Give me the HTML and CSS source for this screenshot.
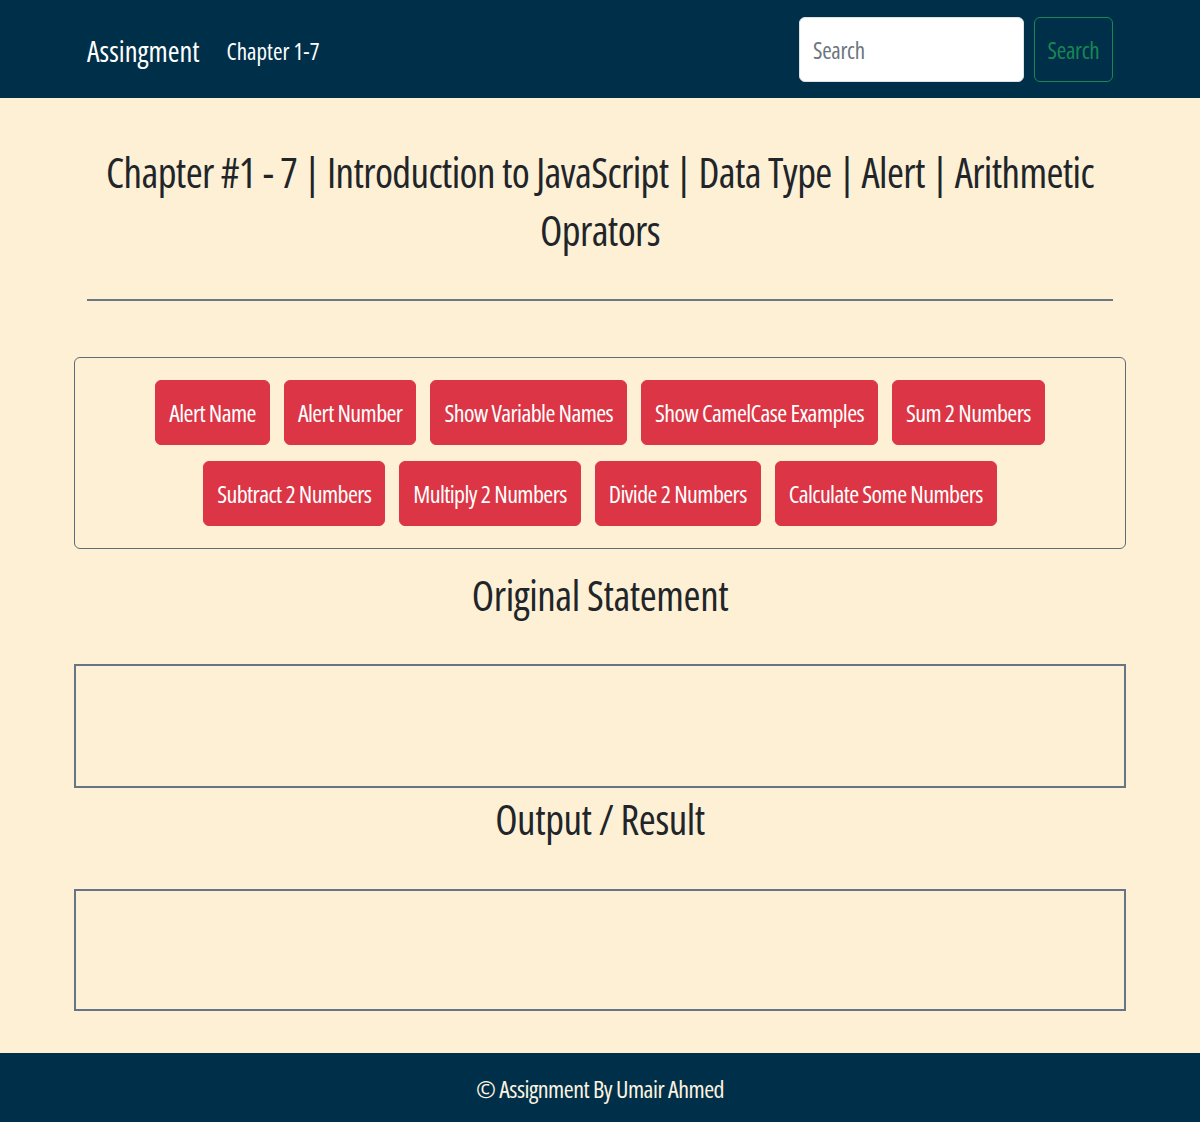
FILE: index.html
```html
<!DOCTYPE html>
<html lang="en">
<head>
<meta charset="utf-8">
<title>Assingment</title>
<link rel="stylesheet" href="styles.css">
</head>
<body>
<nav class="navbar">
  <div class="nav-inner">
    <a class="brand" href="#">Assingment</a>
    <a class="nav-link" href="#">Chapter 1-7</a>
    <form class="search">
      <input class="search-input" type="search" placeholder="Search">
      <button class="search-btn" type="button">Search</button>
    </form>
  </div>
</nav>
<main class="container">
  <h1 class="title">Chapter #1 - 7 | Introduction to JavaScript | Data Type | Alert | Arithmetic Oprators</h1>
  <hr class="rule">
  <div class="btn-box">
    <button class="btn">Alert Name</button>
    <button class="btn">Alert Number</button>
    <button class="btn">Show Variable Names</button>
    <button class="btn">Show CamelCase Examples</button>
    <button class="btn">Sum 2 Numbers</button>
    <button class="btn">Subtract 2 Numbers</button>
    <button class="btn">Multiply 2 Numbers</button>
    <button class="btn">Divide 2 Numbers</button>
    <button class="btn">Calculate Some Numbers</button>
  </div>
  <h2 class="sub sub-first">Original Statement</h2>
  <div class="panel panel-a"></div>
  <h2 class="sub sub-second">Output / Result</h2>
  <div class="panel panel-b"></div>
</main>
<footer class="footer">© Assignment By Umair Ahmed</footer>
</body>
</html>
```
FILE: styles.css
```css
* { box-sizing: border-box; }
body {
  margin: 0;
  background: #fdf0d5;
  font-family: "Open Sans", "Noto Sans", sans-serif;
  font-stretch: 75%;
  color: #212529;
}
.navbar {
  background: #003049;
  height: 98px;
  display: flex;
  align-items: center;
}
.nav-inner {
  width: 1026px;
  margin: 0 auto;
  display: flex;
  align-items: center;
}
.brand {
  color: #fff;
  text-decoration: none;
  font-size: 28.5px;
  line-height: 40px;
  margin-right: 27px;
  padding-top: 3px;
}
.nav-link {
  color: #fff;
  text-decoration: none;
  font-size: 23px;
  line-height: 40px;
  padding-top: 3px;
}
.search {
  margin-left: auto;
  display: flex;
  gap: 10px;
}
.search-input {
  width: 225px;
  height: 65px;
  border: 1px solid #dee2e6;
  border-radius: 6px;
  background: #fff;
  padding: 2px 13px 0;
  font-family: inherit;
  font-stretch: 75%;
  font-size: 23px;
  letter-spacing: -0.3px;
  color: #212529;
  outline: none;
}
.search-input::placeholder { color: #6c757d; }
.search-btn {
  width: 79px;
  height: 65px;
  border: 1px solid #198754;
  border-radius: 6px;
  background: transparent;
  color: #198754;
  font-family: inherit;
  font-stretch: 75%;
  font-size: 23px;
  letter-spacing: -0.3px;
  padding: 2px 0 0;
}
.container {
  width: 1052px;
  margin: 0 auto;
}
.title {
  margin: 45px 12px 0;
  text-align: center;
  font-size: 41px;
  letter-spacing: -0.6px;
  line-height: 58px;
  font-weight: 500;
}
.rule {
  margin: 40px 13px 0;
  border: 0;
  border-top: 2px solid #6b7785;
  opacity: 1;
}
.btn-box {
  margin-top: 56px;
  border: 1px solid #5f6b78;
  border-radius: 6px;
  padding: 22px 20px;
  display: flex;
  flex-wrap: wrap;
  justify-content: center;
  gap: 16px 14px;
}
.btn {
  background: #dc3545;
  color: #fff;
  border: 1px solid #dc3545;
  border-radius: 6px;
  font-family: inherit;
  font-stretch: 75%;
  font-size: 24px;
  letter-spacing: -0.6px;
  line-height: 37px;
  padding: 13px 13px;
  cursor: pointer;
}
.sub {
  text-align: center;
  font-size: 41px;
  font-weight: 500;
  letter-spacing: -0.4px;
  line-height: 58px;
  margin: 0;
}
.sub-first { margin: 17px 0 40px; }
.sub-second { margin: 2px 0 41px; }
.panel {
  border: 2px solid #667585;
}
.panel-a { height: 124px; }
.panel-b { height: 122px; }
.footer {
  margin-top: 42px;
  background: #003049;
  color: #fdf3e0;
  text-align: center;
  font-size: 24px;
  letter-spacing: -0.5px;
  line-height: 40px;
  padding: 16px 0 14px;
}
```
